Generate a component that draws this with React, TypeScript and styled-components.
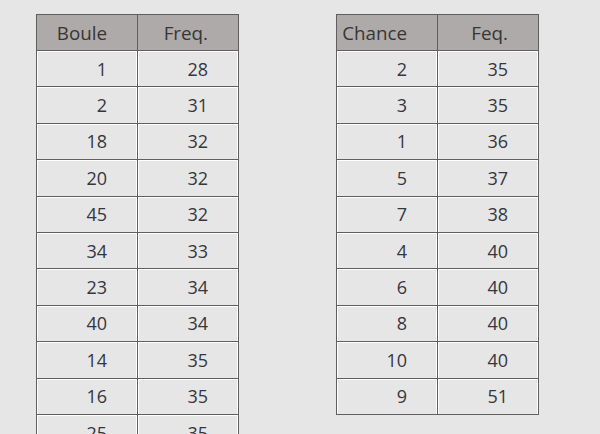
import React from "react";
import styled, { createGlobalStyle } from "styled-components";

const Global = createGlobalStyle`
  html, body {
    margin: 0;
    padding: 0;
    background: #e7e6e6;
    overflow: hidden;
  }
  body {
    font-family: "Open Sans", "Noto Sans", sans-serif;
  }
`;

const Page = styled.div`
  display: flex;
  align-items: flex-start;
  gap: 97px;
  padding: 14px 0 0 36px;
  height: 434px;
  box-sizing: border-box;
  overflow: hidden;
`;

const Table = styled.div`
  display: grid;
  grid-template-columns: 101px 101px;
  grid-template-rows: 36px;
  grid-auto-rows: 36.4px;
  border-top: 1px solid #5f5f5f;
  border-left: 1px solid #5f5f5f;
`;

const Cell = styled.div<{ $header?: boolean }>`
  box-sizing: border-box;
  display: flex;
  align-items: center;
  justify-content: flex-end;
  padding-right: ${(p) => (p.$header ? "30px" : "30px")};
  border-right: 1px solid #5f5f5f;
  border-bottom: 1px solid #5f5f5f;
  font-size: ${(p) => (p.$header ? "18.8px" : "18px")};
  color: ${(p) => (p.$header ? "#383535" : "#343640")};
  background: ${(p) => (p.$header ? "#aeaaaa" : "#e7e6e6")};
  box-shadow: ${(p) =>
    p.$header ? "none" : "inset 1px 1px 0 #ffffff, inset -1px 0 0 #ffffff"};
  white-space: nowrap;
`;

type Row = [number, number];

const boules: Row[] = [
  [1, 28],
  [2, 31],
  [18, 32],
  [20, 32],
  [45, 32],
  [34, 33],
  [23, 34],
  [40, 34],
  [14, 35],
  [16, 35],
  [25, 35],
];

const chances: Row[] = [
  [2, 35],
  [3, 35],
  [1, 36],
  [5, 37],
  [7, 38],
  [4, 40],
  [6, 40],
  [8, 40],
  [10, 40],
  [9, 51],
];

function FreqTable({ heads, rows }: { heads: [string, string]; rows: Row[] }) {
  return (
    <Table>
      <Cell $header>{heads[0]}</Cell>
      <Cell $header>{heads[1]}</Cell>
      {rows.map(([a, b], i) => (
        <React.Fragment key={i}>
          <Cell>{a}</Cell>
          <Cell>{b}</Cell>
        </React.Fragment>
      ))}
    </Table>
  );
}

export default function App() {
  return (
    <>
      <Global />
      <Page>
        <FreqTable heads={["Boule", "Freq."]} rows={boules} />
        <FreqTable heads={["Chance", "Feq."]} rows={chances} />
      </Page>
    </>
  );
}
